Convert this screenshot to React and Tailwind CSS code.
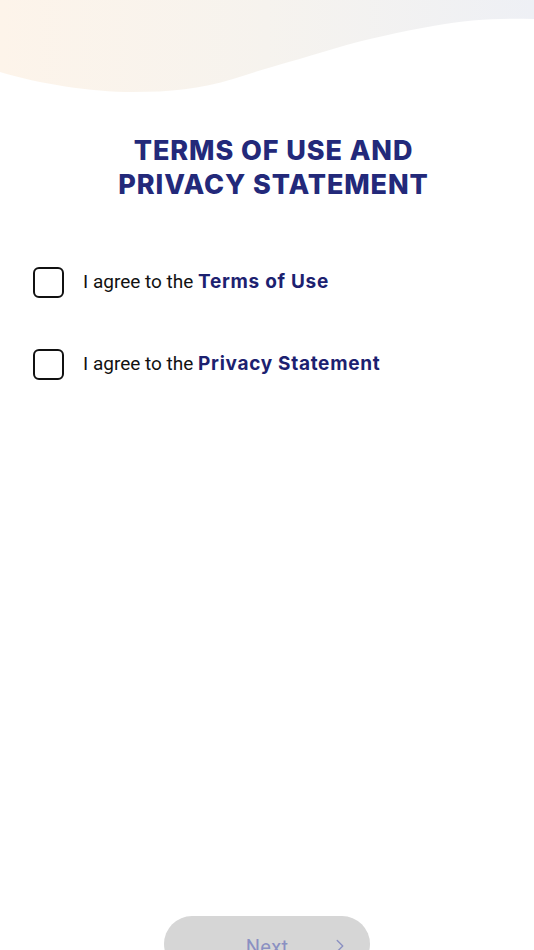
import { ChevronRight } from 'lucide-react';

function Wave() {
  return (
    <svg className="absolute top-0 left-0 w-full h-[100px]" viewBox="0 0 534 100" preserveAspectRatio="none">
      <defs>
        <linearGradient id="waveFill" x1="0" y1="0" x2="1" y2="0">
          <stop offset="0" stopColor="#fdf4ea" />
          <stop offset="0.5" stopColor="#f6f3ee" />
          <stop offset="1" stopColor="#eef0f5" />
        </linearGradient>
      </defs>
      <path
        d="M0 0 H534 V19 C500 18 470 19 433 26 C400 32 370 38 333 49 C290 62 260 70 233 79 C200 89 170 92 133 92 C90 92 40 84 0 72 Z"
        fill="url(#waveFill)"
      />
    </svg>
  );
}

function CheckRow({ label }) {
  return (
    <label className="flex items-center gap-[19px] cursor-pointer">
      <span className="w-[31px] h-[31px] border-[2.5px] border-[#111] rounded-[6px] shrink-0" />
      <span className="text-[19px] text-[#111] font-['Roboto',sans-serif]">
        I agree to the{' '}
        <span className="font-bold text-[#1c2170] font-['Inter',sans-serif] tracking-[0.7px]">{label}</span>
      </span>
    </label>
  );
}

export default function App() {
  return (
    <div className="relative w-[534px] h-[950px] bg-white overflow-hidden">
      <Wave />

      <div className="relative flex flex-col h-full">
        {/* Title */}
        <h1 className="mt-[134px] pl-[13px] text-center text-[27px] leading-[34px] font-extrabold text-[#23297a] font-['Inter',sans-serif] tracking-[0.9px]">
          TERMS OF USE AND
          <br />
          PRIVACY STATEMENT
        </h1>

        {/* Checkboxes */}
        <div className="mt-[65px] pl-[33px] flex flex-col gap-[51px]">
          <CheckRow label="Terms of Use" />
          <CheckRow label="Privacy Statement" />
        </div>

        {/* Next button */}
        <div className="mt-auto flex justify-center">
          <button className="relative w-[206px] h-[56px] mb-[-22px] rounded-full bg-[#d6d6d6] flex items-start justify-center pt-[16px]">
            <span className="text-[20px] text-[#8a90c2] font-['Roboto',sans-serif] tracking-[0.3px]">Next</span>
            <ChevronRight className="absolute right-[19px] top-[19px] text-[#8a90c2]" size={22} strokeWidth={1.5} />
          </button>
        </div>
      </div>
    </div>
  );
}
